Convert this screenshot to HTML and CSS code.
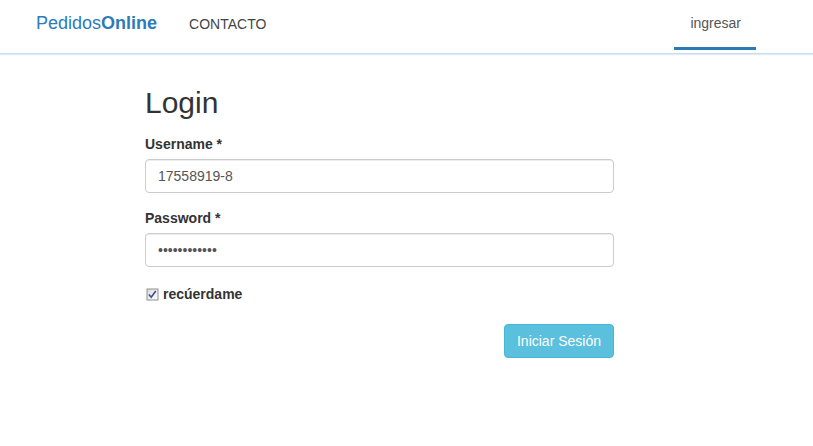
FILE: index.html
```html
<!DOCTYPE html>
<html lang="es">
<head>
<meta charset="utf-8">
<title>Login - PedidosOnline</title>
<link rel="stylesheet" href="styles.css">
</head>
<body>
<header class="navbar">
  <div class="nav-left">
    <a class="brand" href="#">Pedidos<b>Online</b></a>
    <a class="nav-link" href="#">CONTACTO</a>
  </div>
  <div class="nav-right">
    <a class="nav-link active" href="#">ingresar</a>
  </div>
</header>
<main class="content">
  <h2 class="title">Login</h2>
  <form class="login-form">
    <div class="form-group">
      <label class="label" for="user">Username *</label>
      <input class="input" id="user" type="text" value="17558919-8">
    </div>
    <div class="form-group">
      <label class="label" for="pass">Password *</label>
      <input class="input" id="pass" type="password" value="abcdefghijkl">
    </div>
    <label class="checkbox">
      <svg class="check-icon" width="13" height="13" viewBox="0 0 13 13" aria-hidden="true">
        <defs>
          <linearGradient id="cbg" x1="0" y1="0" x2="1" y2="1">
            <stop offset="0" stop-color="#dcdcdc"/>
            <stop offset="1" stop-color="#ffffff"/>
          </linearGradient>
        </defs>
        <rect x="0.5" y="0.5" width="12" height="12" fill="#8f8f8f"/>
        <rect x="1.5" y="1.5" width="10" height="10" fill="url(#cbg)"/>
        <path d="M3 6.5 L5.2 9.2 L9.8 3" fill="none" stroke="#3b4f8c" stroke-width="1.6"/>
      </svg>
      <span>recúerdame</span>
    </label>
    <div class="actions">
      <button class="btn" type="button">Iniciar Sesión</button>
    </div>
  </form>
</main>
</body>
</html>
```
FILE: styles.css
```css
html, body {
  margin: 0;
  padding: 0;
  background: #fff;
}
body {
  font-family: "Liberation Sans", Arial, sans-serif;
  font-size: 14px;
  line-height: 20px;
  color: #333;
}
a { text-decoration: none; }

.navbar {
  display: flex;
  justify-content: space-between;
  height: 53px;
  border-bottom: 1px solid #c6dbec;
  box-shadow: 0 1px 1px rgba(200, 220, 236, 0.5);
  padding: 0 57px 0 36px;
}
.nav-left {
  display: flex;
  align-items: flex-start;
}
.brand {
  font-size: 18px;
  line-height: 20px;
  padding-top: 13px;
  color: #2c7cb9;
  margin-right: 17px;
}
.brand b { font-weight: bold; }
.nav-link {
  display: block;
  padding: 14px 15px 13px;
  color: #444;
  font-size: 14px;
  line-height: 20px;
  border-bottom: 3px solid transparent;
}
.nav-right .nav-link {
  color: #555;
  padding: 13px 15px 14px 16px;
}
.nav-link.active {
  border-bottom-color: #2a7ab6;
}

.content {
  width: 469px;
  margin-left: 145px;
  padding-top: 32px;
}
.title {
  font-size: 30px;
  font-weight: normal;
  line-height: 33px;
  margin: 0 0 15px;
  color: #333;
}
.form-group {
  display: flex;
  flex-direction: column;
  margin-bottom: 15px;
}
.label {
  font-weight: bold;
  margin-bottom: 5px;
}
.input {
  box-sizing: border-box;
  height: 34px;
  width: 100%;
  padding: 6px 12px;
  font-family: inherit;
  font-size: 14px;
  color: #555;
  border: 1px solid #ccc;
  border-radius: 4px;
  box-shadow: inset 0 1px 1px rgba(0, 0, 0, 0.075);
  background: #fff;
  outline: none;
}
.checkbox {
  display: flex;
  align-items: center;
  gap: 4px;
  font-weight: bold;
  margin-top: 17px;
  padding-left: 1px;
}
.check-icon { flex: none; }
.actions {
  display: flex;
  justify-content: flex-end;
  margin-top: 20px;
}
.btn {
  height: 34px;
  padding: 6px 12px;
  font-family: inherit;
  font-size: 14px;
  line-height: 20px;
  color: #fff;
  background: #5bc0de;
  border: 1px solid #46b8da;
  border-radius: 4px;
}
```
